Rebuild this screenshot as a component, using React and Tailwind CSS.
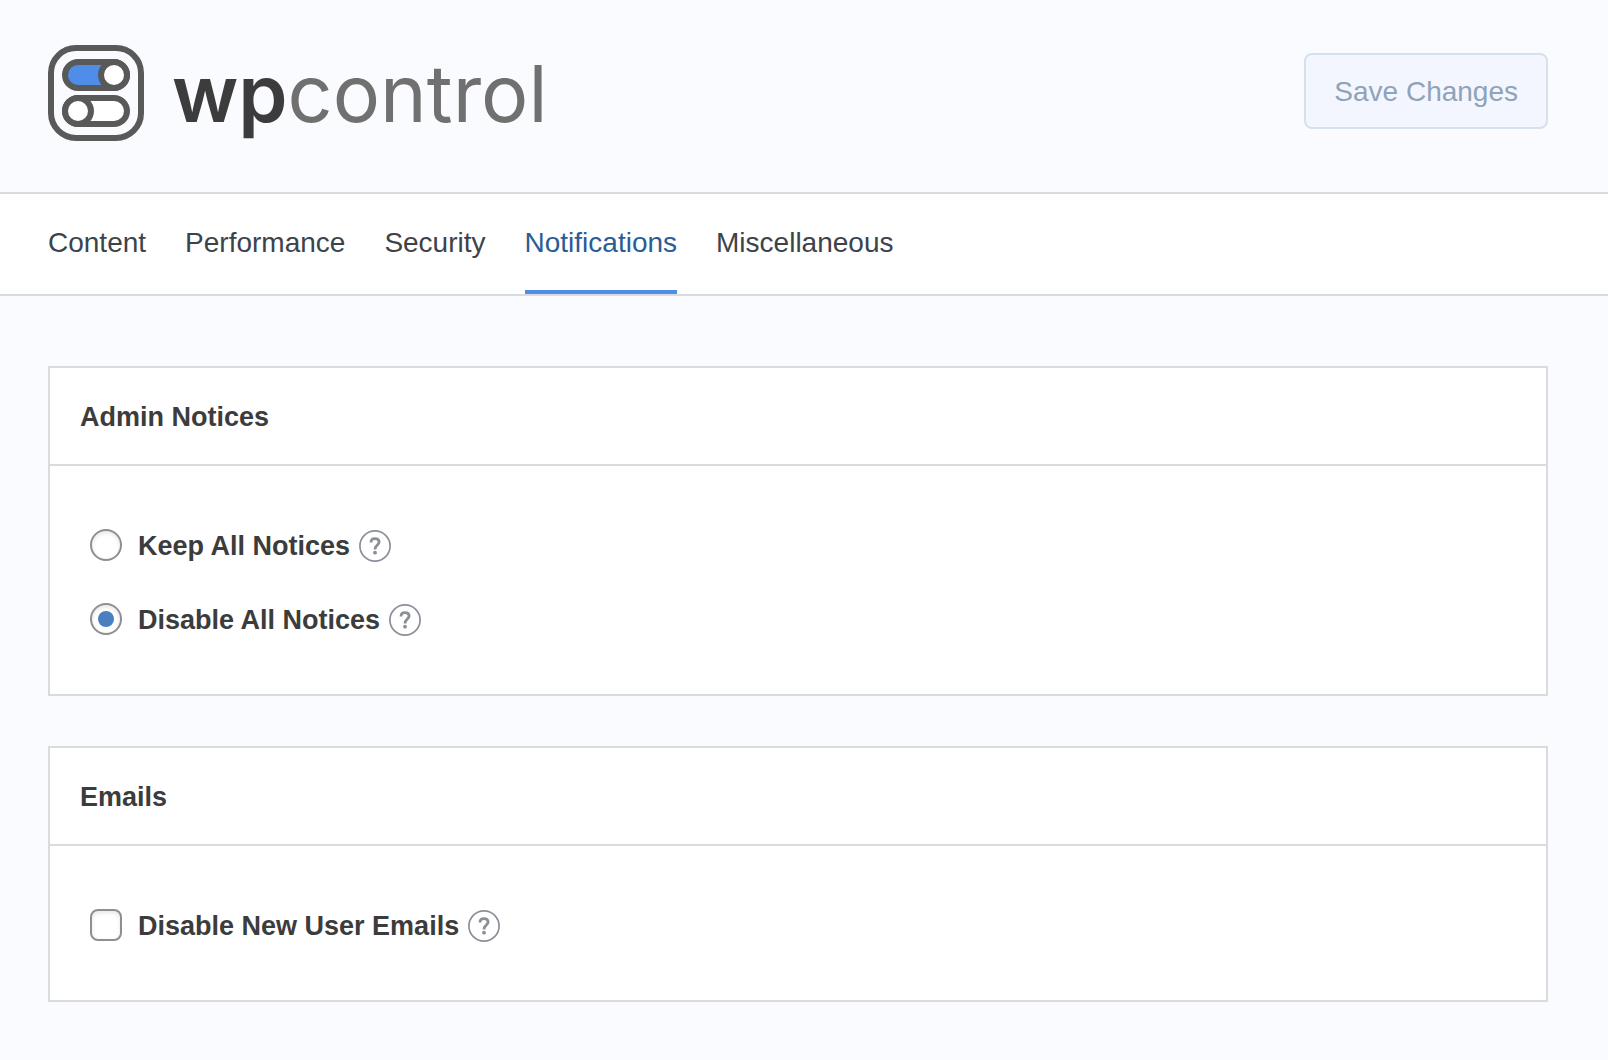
import { useState } from "react";

const tabs = ["Content", "Performance", "Security", "Notifications", "Miscellaneous"];

const LogoMark = () => (
  <svg viewBox="0 0 96 96" className="size-24 shrink-0" fill="none" stroke="#595959" strokeWidth="6" aria-hidden="true">
    <rect x="3" y="3" width="90" height="90" rx="25" />
    {/* top toggle, on */}
    <rect x="17" y="17" width="62" height="26" rx="13" fill="#4f8de8" />
    <circle cx="66" cy="30" r="13" fill="#fff" />
    {/* bottom toggle, off */}
    <rect x="17" y="53" width="62" height="26" rx="13" fill="#fff" />
    <circle cx="30" cy="66" r="13" fill="#fff" />
  </svg>
);

const HelpButton = ({ topic }) => (
  <button type="button" aria-label={`Help: ${topic}`} className="mt-0.5 ml-[9px] size-8 text-[#8c8f9a]">
    <svg viewBox="0 0 32 32" className="size-8" fill="none" stroke="currentColor" aria-hidden="true">
      <circle cx="16" cy="16" r="15.1" strokeWidth="1.7" />
      <path d="M12 12.4C12 9.8 13.7 8.6 16 8.6C18.4 8.6 20.1 9.9 20.1 12C20.1 14.9 16 15.2 16 19.4" strokeWidth="2.8" />
      <circle cx="16" cy="22.7" r="1.9" fill="currentColor" stroke="none" />
    </svg>
  </button>
);

const Card = ({ title, children }) => (
  <section className="border-2 border-[#dadbdc] bg-white">
    <h2 className="border-b-2 border-[#dadbdc] px-[30px] pt-[29px] pb-[27px] text-[27px] leading-[40px] font-bold text-[#3c3c3c]">
      {title}
    </h2>
    <div className="flex flex-col gap-[38px] px-10 pt-[61px] pb-[57px]">{children}</div>
  </section>
);

const Option = ({ id, label, children }) => (
  <div className="flex h-9 items-center">
    {children}
    <label htmlFor={id} className="ml-4 pt-0.5 text-[27px] leading-[36px] font-bold text-[#3c3c3c]">
      {label}
    </label>
    <HelpButton topic={label} />
  </div>
);

const Radio = ({ id, value, checked, onChange }) => (
  <input
    id={id}
    type="radio"
    name="notices"
    value={value}
    checked={checked}
    onChange={() => onChange(value)}
    className="grid size-8 shrink-0 appearance-none place-items-center rounded-full border-2 border-[#8c8f94] bg-white shadow-[inset_0_2px_4px_rgba(0,0,0,0.1)] checked:before:size-4 checked:before:rounded-full checked:before:bg-[#4a80c0]"
  />
);

const App = () => {
  const [active, setActive] = useState("Notifications");
  const [notices, setNotices] = useState("disable");

  return (
    <div className="min-h-screen bg-[#fafbff] font-['Liberation_Sans',Arial,sans-serif]">
      {/* ===== HEADER ===== */}
      <header className="flex items-start justify-between border-b-2 border-[#dadbdc] pt-[45px] pr-[60px] pb-[51px] pl-12">
        <div className="flex items-center gap-7">
          <LogoMark />
          <h1 className="font-['Inter',sans-serif] text-[79px] leading-[96px] font-normal text-[#707070]">
            <span className="font-semibold text-[#3c3c3c]">wp</span>control
          </h1>
        </div>
        <button
          type="button"
          disabled
          className="mt-2 rounded-lg border-2 border-[#d6e1ec] bg-[#f3f6ff] px-7 pt-[19px] pb-[17px] text-[28px] leading-[36px] text-[#8fa3b8]"
        >
          Save Changes
        </button>
      </header>

      {/* ===== TABS ===== */}
      <nav className="flex h-[102px] gap-[39px] border-b-2 border-[#dadbdc] bg-white px-12">
        {tabs.map((tab) => (
          <a
            key={tab}
            href={`#${tab.toLowerCase()}`}
            onClick={() => setActive(tab)}
            className={`border-b-4 pt-[31px] text-[28px] leading-[36px] ${
              active === tab ? "border-[#4f8de8] text-[#2a5c96]" : "border-transparent text-[#3c434a]"
            }`}
          >
            {tab}
          </a>
        ))}
      </nav>

      <main className="flex flex-col gap-[50px] pt-[70px] pr-[60px] pb-[58px] pl-12">
        <Card title="Admin Notices">
          <Option id="keep" label="Keep All Notices">
            <Radio id="keep" value="keep" checked={notices === "keep"} onChange={setNotices} />
          </Option>
          <Option id="disable" label="Disable All Notices">
            <Radio id="disable" value="disable" checked={notices === "disable"} onChange={setNotices} />
          </Option>
        </Card>

        <Card title="Emails">
          <Option id="new-user" label="Disable New User Emails">
            <input
              id="new-user"
              type="checkbox"
              className="size-8 shrink-0 appearance-none rounded-lg border-2 border-[#8c8f94] bg-white shadow-[inset_0_2px_4px_rgba(0,0,0,0.1)] checked:bg-[#4a80c0]"
            />
          </Option>
        </Card>
      </main>
    </div>
  );
};

export default App;
